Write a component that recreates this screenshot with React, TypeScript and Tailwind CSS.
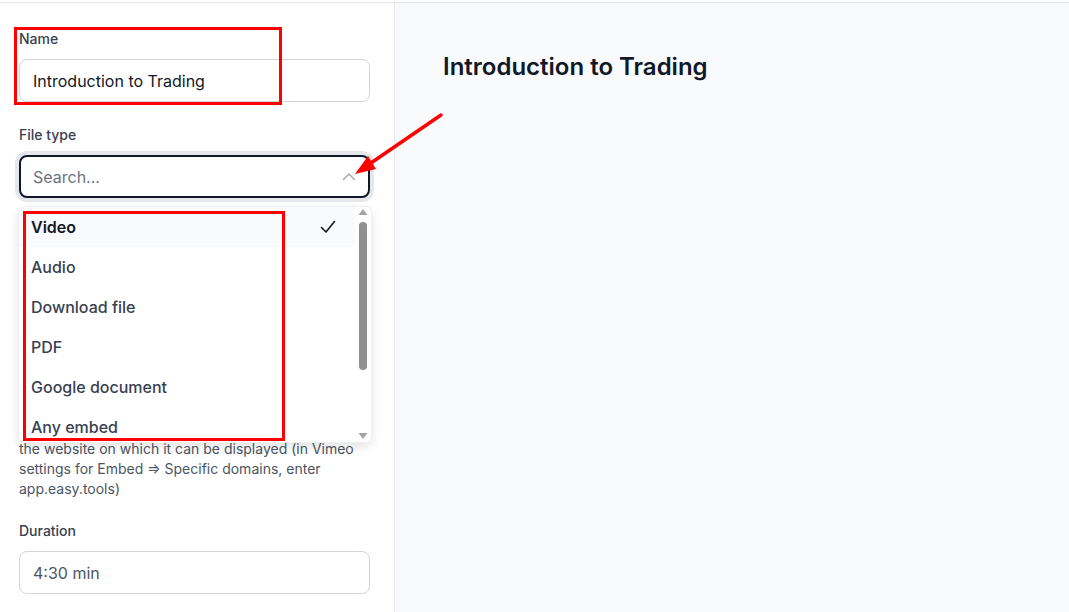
import React from "react";

const items = ["Video", "Audio", "Download file", "PDF", "Google document", "Any embed"];

export default function App() {
  return (
    <div
      className="relative flex h-[612px] w-full flex-col bg-white pt-[2px]"
      style={{ fontFamily: "Inter, 'Noto Sans', sans-serif" }}
    >
      <div className="flex flex-1 border-t border-[#e5e7eb]">
        <aside className="flex w-[395px] shrink-0 flex-col border-r border-[#e5e7eb] bg-white pl-[19px] pr-6 pt-[26px]">
          <label className="text-sm font-medium leading-5 text-[#374151]">Name</label>
          <div className="mt-2.5 flex h-[43px] items-center rounded-lg border border-[#d1d5db] bg-white px-[13px] text-base text-[#111827]">
            Introduction to Trading
          </div>

          <label className="mt-[23px] text-sm font-medium leading-5 text-[#374151]">File type</label>
          <div className="relative mt-2.5">
            <div className="flex h-[43px] items-center justify-between rounded-lg border-2 border-[#111827] bg-white pl-3 pr-3 text-base text-[#6b7280] ring-4 ring-[#e5e7eb]">
              <span>Search...</span>
              <svg width="14" height="9" viewBox="0 0 14 9" fill="none" className="mr-0">
                <path d="M1.5 7.5L7 2l5.5 5.5" stroke="#9ca3af" strokeWidth="1.4" strokeLinecap="round" strokeLinejoin="round" />
              </svg>
            </div>

            <div className="absolute left-0 top-[52px] z-10 flex h-[235px] w-[352px] overflow-hidden rounded-md bg-white shadow-[0_4px_12px_rgba(0,0,0,0.12)] ring-1 ring-[#eef0f3]">
              <ul className="flex-1">
                {items.map((it, i) => (
                  <li
                    key={it}
                    className={
                      "flex h-10 items-center justify-between pl-3 pr-[19px] text-base " +
                      (i === 0 ? "bg-[#f9fafb] font-semibold text-[#111827]" : "font-medium text-[#374151]")
                    }
                  >
                    <span>{it}</span>
                    {i === 0 && (
                      <svg width="16" height="14" viewBox="0 0 16 14" fill="none">
                        <path d="M1.5 7.5l4.5 4.5L14.5 1.5" stroke="#111827" strokeWidth="1.6" strokeLinecap="round" strokeLinejoin="round" />
                      </svg>
                    )}
                  </li>
                ))}
              </ul>
              <div className="flex w-[16px] flex-col items-center bg-white pt-[1px]">
                <svg width="10" height="8" viewBox="0 0 10 8" className="mt-[0px]">
                  <path d="M5 1L9.5 7H0.5Z" fill="#a3a3a3" />
                </svg>
                <div className="mt-[6px] h-[148px] w-[8px] rounded-full bg-[#8f8f8f]" />
                <div className="flex-1" />
                <svg width="10" height="8" viewBox="0 0 10 8" className="mb-[2px]">
                  <path d="M5 7L9.5 1H0.5Z" fill="#a3a3a3" />
                </svg>
              </div>
            </div>
          </div>

          <p className="mt-[241px] text-sm leading-5 text-[#4b5563]">
            the website on which it can be displayed (in Vimeo settings for Embed ⇒ Specific domains, enter app.easy.tools)
          </p>

          <label className="mt-[22px] text-sm font-medium leading-5 text-[#374151]">Duration</label>
          <div className="mt-2.5 flex h-[43px] items-center rounded-lg border border-[#d1d5db] bg-white px-[13px] text-base text-[#4b5563]">
            4:30 min
          </div>
        </aside>

        <main className="flex-1 bg-[#f9fafb] pl-12 pt-12">
          <h1 className="text-2xl font-semibold leading-8 text-[#111827]">Introduction to Trading</h1>
        </main>
      </div>

      {/* annotations */}
      <div className="pointer-events-none absolute left-[14px] top-[27px] h-[78px] w-[268px] border-[3px] border-[#ff0000]" />
      <div className="pointer-events-none absolute left-[23px] top-[211px] z-20 h-[230px] w-[262px] border-[3px] border-[#ff0000]" />
      <svg className="pointer-events-none absolute left-0 top-0 z-30" width="1069" height="612">
        <line x1="441" y1="115" x2="368" y2="165" stroke="#ff0000" strokeWidth="3.5" strokeLinecap="round" />
        <path d="M355 174 L368 156 L376 169 Z" fill="#ff0000" />
      </svg>
    </div>
  );
}
